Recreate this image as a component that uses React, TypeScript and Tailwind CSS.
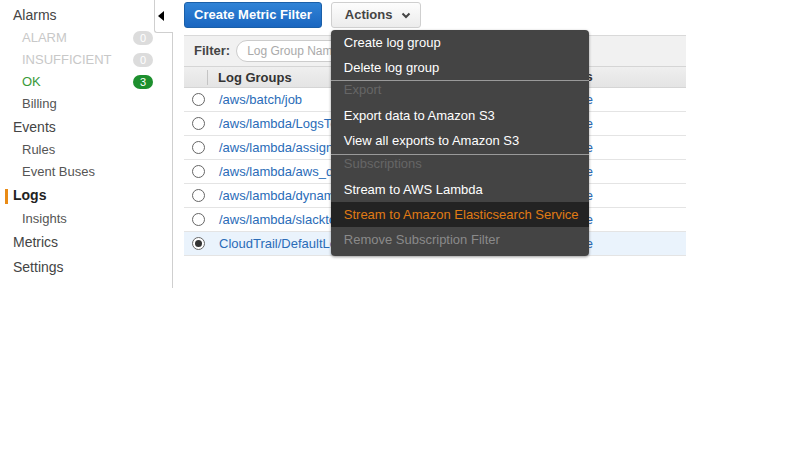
import React from 'react'

const font = { fontFamily: '"Liberation Sans", Arial, sans-serif' }

function Badge({ n, green }: { n: number; green?: boolean }) {
  return (
    <span
      className={
        'ml-auto mr-[19px] flex h-[14px] w-[20px] items-center justify-center rounded-full text-[11px] text-white ' +
        (green ? 'bg-[#1d8f2e]' : 'bg-[#dcdcdc]')
      }
    >
      {n}
    </span>
  )
}

function Sidebar() {
  const top = 'flex h-6 items-center pl-[13px] text-[14px] text-[#444]'
  const sub = 'flex h-[22px] items-center pl-[22px] text-[13px] text-[#555]'
  return (
    <div className="relative h-[288px] w-[173px] shrink-0 border-r border-[#cfcfcf] pt-[3px]">
      <div className="absolute right-[-1px] top-0 flex h-[33px] w-[19px] items-center justify-center rounded-bl-[3px] border-b border-l border-[#cfcfcf] bg-white">
        <span className="ml-[-6px] block h-0 w-0 border-y-[5px] border-r-[6px] border-y-transparent border-r-black" />
      </div>
      <div className={top}>Alarms</div>
      <div className={sub + ' !text-[#c8c8c8]'}>
        ALARM <Badge n={0} />
      </div>
      <div className={sub + ' !text-[#c8c8c8]'}>
        INSUFFICIENT <Badge n={0} />
      </div>
      <div className={sub + ' !text-[#3a9a3a]'}>
        OK <Badge n={3} green />
      </div>
      <div className={sub}>Billing</div>
      <div className={top}>Events</div>
      <div className={sub}>Rules</div>
      <div className={sub}>Event Buses</div>
      <div className={top + ' relative h-[25px] font-bold !text-[#222]'}>
        <span className="absolute left-[5px] top-[6px] h-[15px] w-[3px] bg-[#e98b16]" />
        Logs
      </div>
      <div className={sub}>Insights</div>
      <div className={top + ' h-[25px]'}>Metrics</div>
      <div className={top + ' h-[25px]'}>Settings</div>
    </div>
  )
}

function Radio({ checked }: { checked?: boolean }) {
  return (
    <span className="flex h-[13px] w-[13px] items-center justify-center rounded-full border border-[#666] bg-white">
      {checked && <span className="h-[7px] w-[7px] rounded-full bg-[#333]" />}
    </span>
  )
}

const groups = [
  '/aws/batch/job',
  '/aws/lambda/LogsToElasticsearch',
  '/aws/lambda/assignment-handler',
  '/aws/lambda/aws_demo',
  '/aws/lambda/dynamoStream',
  '/aws/lambda/slacktoAWS',
  'CloudTrail/DefaultLogGroup',
]

function Menu() {
  const item = 'flex h-[25px] items-center whitespace-nowrap px-[13px] text-[13px] text-white'
  const head = 'flex h-[22px] items-center px-[13px] pb-[4px] text-[13px] text-[#666]'
  return (
    <div className="absolute left-0 top-[28px] z-10 w-[258px] rounded-[4px] bg-[#444] pb-[4px] shadow-[0_1px_3px_rgba(0,0,0,0.4)]">
      <div className={item}>Create log group</div>
      <div className={item}>Delete log group</div>
      <div className="h-px bg-[#9a9a9a]" />
      <div className={head}>Export</div>
      <div className={item}>Export data to Amazon S3</div>
      <div className={item}>View all exports to Amazon S3</div>
      <div className="mt-[1px] h-px bg-[#9a9a9a]" />
      <div className={head}>Subscriptions</div>
      <div className={item}>Stream to AWS Lambda</div>
      <div className={item + ' bg-[#232323] !text-[#e07b14]'}>Stream to Amazon Elasticsearch Service</div>
      <div className={item + ' !text-[#8a8a8a]'}>Remove Subscription Filter</div>
    </div>
  )
}

export default function App() {
  return (
    <div className="flex h-[449px] w-[800px] bg-white" style={font}>
      <Sidebar />
      <div className="ml-[11px] w-[502px] pt-[2px]">
        <div className="flex gap-[9px]">
          <button className="h-[26px] rounded-[3px] border border-[#1a5fa8] bg-gradient-to-b from-[#3083d6] to-[#1a66c0] px-[9px] text-[13px] font-bold text-white">
            Create Metric Filter
          </button>
          <div className="relative">
            <button className="flex h-[26px] w-[90px] items-center rounded-[3px] border border-[#cfcfcf] bg-gradient-to-b from-[#fdfdfd] to-[#ececec] pl-[13px] text-[13px] font-bold text-[#444]">
              Actions
              <svg className="ml-[9px] mt-[1px]" width="10" height="7" viewBox="0 0 10 7">
                <path d="M1.5 1.5 L5 5 L8.5 1.5" stroke="#444" strokeWidth="2" fill="none" />
              </svg>
            </button>
            <Menu />
          </div>
        </div>
        <div className="mt-[7px] border-t border-[#d9d9d9]">
          <div className="flex h-[30px] items-center bg-[#f1f1f1] pl-[10px]">
            <span className="text-[13px] font-bold text-[#444]">Filter:</span>
            <div className="ml-[6px] flex h-[22px] w-[190px] items-center rounded-full border border-[#ccc] bg-white pl-[10px] text-[12px] text-[#aaa]">
              Log Group Name Prefix
            </div>
          </div>
          <div className="flex h-[22px] items-center border-y border-[#d5d5d5] bg-gradient-to-b from-[#efefef] to-[#e4e4e4] text-[13px] font-bold text-[#333]">
            <div className="w-[23px]" />
            <div className="w-[325px] border-l border-[#c4c4c4] pl-[10px] leading-[15px]">Log Groups</div>
            <div className="pl-[11px]">Insights</div>
          </div>
          {groups.map((g, i) => {
            const sel = i === groups.length - 1
            return (
              <div
                key={g}
                className={
                  'flex h-[24px] items-center border-b border-[#e4e4e4] text-[13px] ' +
                  (sel ? 'bg-[#eaf3fc]' : 'bg-white')
                }
              >
                <div className="flex w-[23px] justify-center pl-[5px]">
                  <Radio checked={sel} />
                </div>
                <div className="w-[325px] pl-[12px] text-[#2a6cb8]">{g}</div>
                <div className="pl-[17px] text-[#2a6cb8]">Explore</div>
              </div>
            )
          })}
        </div>
      </div>
    </div>
  )
}
